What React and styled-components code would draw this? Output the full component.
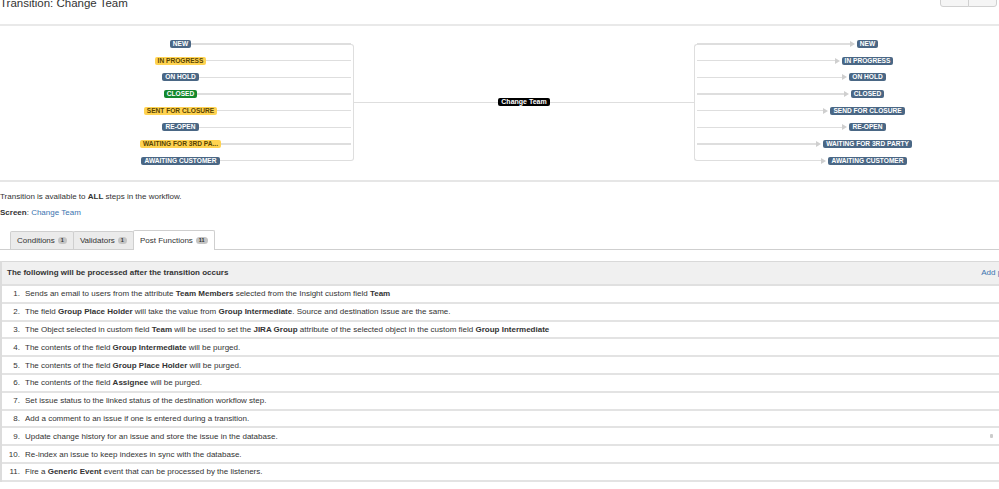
import React from 'react';
import styled, { createGlobalStyle, css } from 'styled-components';

const GlobalStyle = createGlobalStyle`
  html, body {
    margin: 0;
    padding: 0;
    overflow: hidden;
    background: #fff;
  }
  body {
    font-family: "Liberation Sans", Arial, sans-serif;
    color: #333;
  }
`;

const Page = styled.div`
  width: 1050px;
`;

const Header = styled.div`
  display: flex;
  justify-content: space-between;
  align-items: flex-start;
  height: 24px;
  border-bottom: 2px solid #e9e9e9;
`;

const Title = styled.h2`
  margin: -4px 0 0 0;
  font-size: 11.5px;
  line-height: 14px;
  font-weight: normal;
  color: #333;
`;

const ButtonGroup = styled.div`
  display: flex;
  margin: -14px 53px 0 0;
`;

const HeadButton = styled.div`
  width: 27px;
  height: 19px;
  border: 1px solid #d0d0d0;
  background: #f5f5f5;
  border-radius: ${({ first }) => (first ? '3px 0 0 3px' : '0 3px 3px 0')};
  & + & {
    margin-left: -1px;
  }
`;

const Diagram = styled.div`
  display: flex;
  padding: 9.7px 0 11px 10px;
  border-bottom: 2px solid #e6e6e6;
`;

const Side = styled.div`
  display: flex;
`;

const Rows = styled.div`
  display: flex;
  flex-direction: column;
  width: 341px;
`;

const StepRow = styled.div`
  display: flex;
  align-items: center;
  height: 16.67px;
`;

const Filler = styled.div`
  flex: 1;
  margin-left: ${({ offset }) => offset || 0}px;
`;

const Line = styled.div`
  flex: 1;
  height: 1.5px;
  background: #dedede;
`;

const VBar = styled.div`
  width: 2px;
  margin: 8.33px 0;
  border: 1.5px solid #dedede;
  ${({ side }) =>
    side === 'left'
      ? css`
          border-left: none;
          border-radius: 0 3px 3px 0;
        `
      : css`
          border-right: none;
          border-radius: 3px 0 0 3px;
        `}
`;

const Middle = styled.div`
  display: flex;
  align-items: center;
  width: 340px;
`;

const TransitionLabel = styled.span`
  background: #000;
  color: #fff;
  font-size: 7px;
  font-weight: bold;
  line-height: 8px;
  padding: 0 3px;
  border-radius: 2px;
  white-space: nowrap;
`;

const lozengeColors = {
  blue: css`
    background: #4a6785;
    color: #fff;
  `,
  yellow: css`
    background: #ffd351;
    color: #594300;
  `,
  green: css`
    background: #14892c;
    color: #fff;
  `,
};

const Lozenge = styled.span`
  display: inline-block;
  font-size: 6.6px;
  font-weight: bold;
  line-height: 8px;
  padding: 0 3px;
  border-radius: 2px;
  text-transform: uppercase;
  white-space: nowrap;
  ${({ tone }) => lozengeColors[tone]}
`;

const Arrow = styled.span`
  width: 0;
  height: 0;
  border-left: 5px solid #cfcfcf;
  border-top: 3px solid transparent;
  border-bottom: 3px solid transparent;
  margin-right: 2px;
`;

const Info = styled.p`
  margin: ${({ first }) => (first ? '7px' : '0')} 0 0 0;
  font-size: 8px;
  line-height: 16px;
`;

const Link = styled.a`
  color: #3b73af;
  text-decoration: none;
`;

const TabList = styled.div`
  display: flex;
  align-items: flex-end;
  margin-top: 9px;
  padding-left: 10px;
  border-bottom: 1px solid #cfcfcf;
  height: 19px;
`;

const Tab = styled.div`
  display: flex;
  align-items: center;
  height: ${({ active }) => (active ? 19 : 17)}px;
  padding: 0 6px;
  font-size: 8px;
  border: 1px solid #cfcfcf;
  border-bottom: none;
  background: ${({ active }) => (active ? '#fff' : '#ebebeb')};
  margin-bottom: ${({ active }) => (active ? -1 : 0)}px;
  border-radius: 2px 2px 0 0;
  & + & {
    margin-left: -1px;
  }
`;

const Badge = styled.span`
  margin-left: 3px;
  background: #c4c4c4;
  color: #333;
  font-size: 5.5px;
  font-weight: bold;
  line-height: 7px;
  padding: 0 3px;
  border-radius: 4px;
`;

const Table = styled.div`
  margin-top: 11px;
  border-left: 2px solid #dcdcdc;
`;

const TableHead = styled.div`
  display: flex;
  justify-content: space-between;
  align-items: center;
  height: 22px;
  padding: 0 7px 0 5px;
  background: #f0f0f0;
  border-top: 1px solid #d9d9d9;
  border-bottom: 2px solid #e0e0e0;
  font-size: 8px;
  font-weight: bold;
`;

const AddLink = styled(Link)`
  font-weight: normal;
`;

const Row = styled.div`
  display: flex;
  align-items: center;
  box-sizing: border-box;
  height: 17.8px;
  border-bottom: 2px solid #e3e3e3;
  font-size: 8px;
`;

const Num = styled.span`
  width: 18px;
  text-align: right;
  margin-right: 5px;
`;

const Handle = styled.span`
  margin: 0 57px 0 auto;
  width: 3px;
  height: 4px;
  background: #ccc;
  border-radius: 1px;
`;

const fromSteps = [
  ['New', 'blue'],
  ['In Progress', 'yellow'],
  ['On Hold', 'blue'],
  ['Closed', 'green'],
  ['Sent for closure', 'yellow'],
  ['Re-open', 'blue'],
  ['Waiting for 3rd pa...', 'yellow'],
  ['Awaiting customer', 'blue'],
];

const toSteps = [
  'New',
  'In Progress',
  'On Hold',
  'Closed',
  'Send for closure',
  'Re-open',
  'Waiting for 3rd party',
  'Awaiting customer',
];

const functions = [
  <>Sends an email to users from the attribute <b>Team Members</b> selected from the Insight custom field <b>Team</b></>,
  <>The field <b>Group Place Holder</b> will take the value from <b>Group Intermediate</b>. Source and destination issue are the same.</>,
  <>The Object selected in custom field <b>Team</b> will be used to set the <b>JIRA Group</b> attribute of the selected object in the custom field <b>Group Intermediate</b></>,
  <>The contents of the field <b>Group Intermediate</b> will be purged.</>,
  <>The contents of the field <b>Group Place Holder</b> will be purged.</>,
  <>The contents of the field <b>Assignee</b> will be purged.</>,
  <>Set issue status to the linked status of the destination workflow step.</>,
  <>Add a comment to an issue if one is entered during a transition.</>,
  <>Update change history for an issue and store the issue in the database.</>,
  <>Re-index an issue to keep indexes in sync with the database.</>,
  <>Fire a <b>Generic Event</b> event that can be processed by the listeners.</>,
];

const App = () => (
  <Page>
    <GlobalStyle />
    <Header>
      <Title>Transition: Change Team</Title>
      <ButtonGroup>
        <HeadButton first />
        <HeadButton />
      </ButtonGroup>
    </Header>

    <Diagram>
      <Side>
        <Rows>
          {fromSteps.map(([name, tone]) => (
            <StepRow key={name}>
              <Filler />
              <Lozenge tone={tone}>{name}</Lozenge>
              <Line />
            </StepRow>
          ))}
        </Rows>
        <VBar side="left" />
      </Side>
      <Middle>
        <Line />
        <TransitionLabel>Change Team</TransitionLabel>
        <Line />
      </Middle>
      <Side>
        <VBar side="right" />
        <Rows>
          {toSteps.map((name) => (
            <StepRow key={name}>
              <Line />
              <Arrow />
              <Lozenge tone="blue">{name}</Lozenge>
              <Filler offset={7} />
            </StepRow>
          ))}
        </Rows>
      </Side>
    </Diagram>

    <Info first>
      Transition is available to <b>ALL</b> steps in the workflow.
    </Info>
    <Info>
      <b>Screen</b>: <Link href="#">Change Team</Link>
    </Info>

    <TabList>
      <Tab>
        Conditions<Badge>1</Badge>
      </Tab>
      <Tab>
        Validators<Badge>1</Badge>
      </Tab>
      <Tab active>
        Post Functions<Badge>11</Badge>
      </Tab>
    </TabList>

    <Table>
      <TableHead>
        <span>The following will be processed after the transition occurs</span>
        <AddLink href="#">Add post function</AddLink>
      </TableHead>
      {functions.map((text, i) => (
        <Row key={i}>
          <Num>{i + 1}.</Num>
          <span>{text}</span>
          {i === 8 && <Handle />}
        </Row>
      ))}
    </Table>
  </Page>
);

export default App;
